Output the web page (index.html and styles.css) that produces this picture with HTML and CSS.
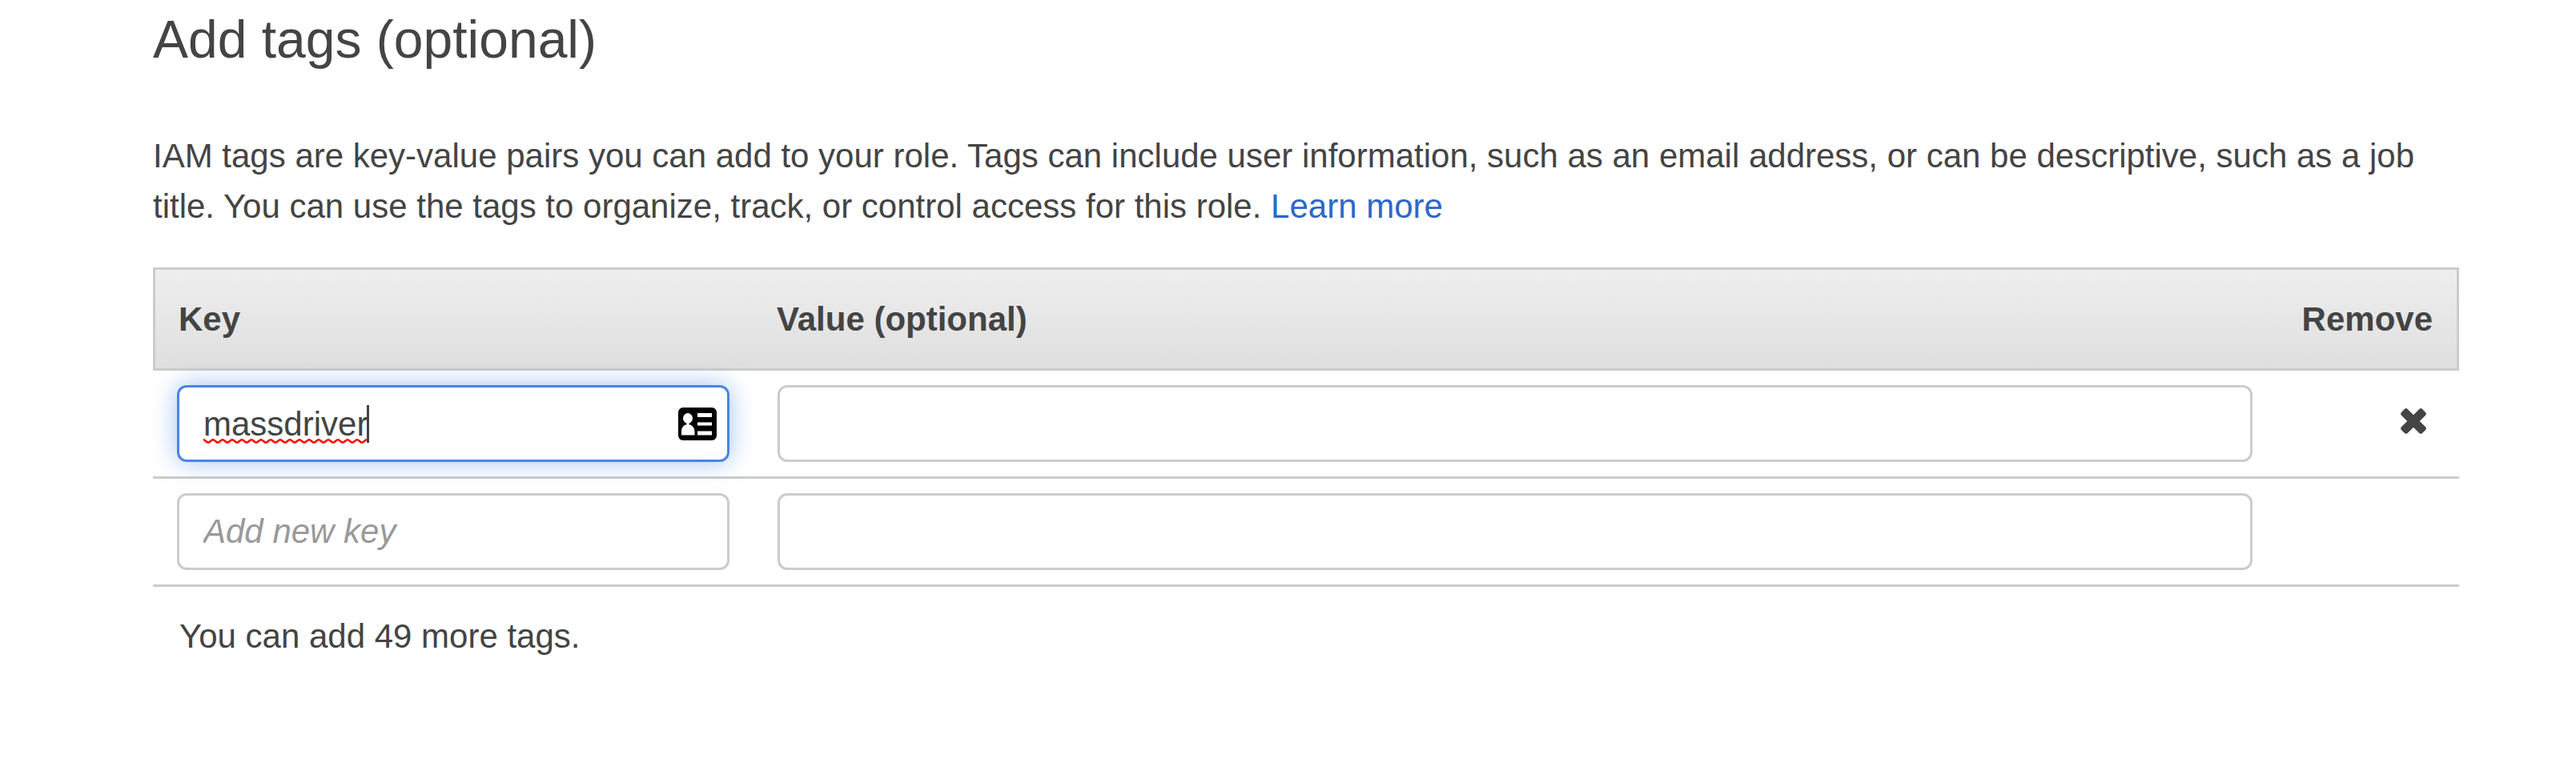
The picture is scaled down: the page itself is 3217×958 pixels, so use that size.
FILE: index.html
```html
<!DOCTYPE html>
<html lang="en">
<head>
<meta charset="utf-8">
<title>Add tags</title>
<link rel="stylesheet" href="styles.css">
</head>
<body>
<main class="page">
  <h1 class="title">Add tags (optional)</h1>
  <p class="intro">IAM tags are key-value pairs you can add to your role. Tags can include user information, such as an email address, or can be descriptive, such as a job title. You can use the tags to organize, track, or control access for this role. <a class="link" href="#">Learn more</a></p>
  <section class="table">
    <div class="head">
      <div>Key</div>
      <div>Value (optional)</div>
      <div class="head-remove">Remove</div>
    </div>
    <div class="row">
      <div class="field field-focus">
        <span class="typed">massdriver<svg class="squiggle" width="204" height="8" viewBox="0 0 204 8"><defs><pattern id="wave" width="12" height="8" patternUnits="userSpaceOnUse"><path d="M-6 5.500 C-4 5.500 -2 2 0 2 S4 5.500 6 5.500 S10 2 12 2 S16 5.500 18 5.500" transform="translate(0 .3)" fill="none" stroke="#f00" stroke-width="2.600"/></pattern></defs><rect width="204" height="8" fill="url(#wave)"/></svg><i class="caret"></i></span>
        <svg class="card" width="48" height="41" viewBox="0 0 48 41"><rect width="48" height="41" rx="6"/><g fill="#fff"><ellipse cx="12" cy="13.500" rx="6" ry="6.500"/><path d="M10.500 18h3v3.500h-3zM4 34.500V30c0-5 3-9 8-9s8.500 4 8.500 9v4.500zM24 7h18v5H24zM24 18.500h18v4H24zM24 29.500h18v5H24z"/></g></svg>
      </div>
      <input class="field" type="text" aria-label="Value">
      <button class="remove" aria-label="Remove tag"><svg width="32" height="32" viewBox="0 0 32 32" fill="#444"><rect x="-2.500" y="10.500" width="37" height="11" rx="3" transform="rotate(45 16 16)"/><rect x="-2.500" y="10.500" width="37" height="11" rx="3" transform="rotate(-45 16 16)"/></svg></button>
    </div>
    <div class="row">
      <input class="field" type="text" placeholder="Add new key" aria-label="Key">
      <input class="field" type="text" aria-label="Value">
    </div>
    <div class="note">You can add 49 more tags.</div>
  </section>
</main>
</body>
</html>
```
FILE: styles.css
```css
* { box-sizing: border-box; }
body {
  margin: 0;
  background: #fff;
  color: #444;
  font: 42px/63px "Liberation Sans", Arial, sans-serif;
}
.page { width: 2880px; margin-left: 191px; padding-top: 16px; }
.title { margin: 0 0 81px; font-size: 66px; line-height: 66px; font-weight: 400; }
.intro { margin: 0 0 45px; }
.link { color: #2d67c9; text-decoration: none; }
.head {
  display: grid;
  grid-template-columns: 747px 1fr auto;
  align-items: center;
  height: 129px;
  padding: 0 30px 0 29px;
  border: 3px solid #ccc;
  background: linear-gradient(#eee, #dfdfdf);
  font-weight: 700;
}
.row {
  display: grid;
  grid-template-columns: 690px 1842px 1fr;
  column-gap: 60px;
  align-items: center;
  height: 135px;
  padding-left: 30px;
  border-bottom: 3px solid #ccc;
}
.field {
  display: flex;
  align-items: center;
  width: 100%;
  height: 96px;
  margin: 0;
  padding: 0 30px;
  border: 3px solid #ccc;
  border-radius: 12px;
  background: #fff;
  color: #444;
  font: inherit;
}
.field::placeholder { color: #999; font-style: italic; opacity: 1; }
.field-focus {
  position: relative;
  justify-content: space-between;
  padding-right: 13px;
  border-color: #4886e5;
  box-shadow: 0 0 30px rgba(72, 134, 229, 0.5);
}
.typed { position: relative; }
.squiggle { position: absolute; left: 0; top: 49px; }
.caret { position: absolute; left: 204px; top: 8px; width: 3px; height: 47px; background: #444; }
.remove {
  display: flex;
  justify-self: end;
  margin: -6px 41px 0 0;
  padding: 0;
  border: 0;
  background: none;
}
.remove svg { overflow: visible; }
.note { padding: 30px 33px; }
```
